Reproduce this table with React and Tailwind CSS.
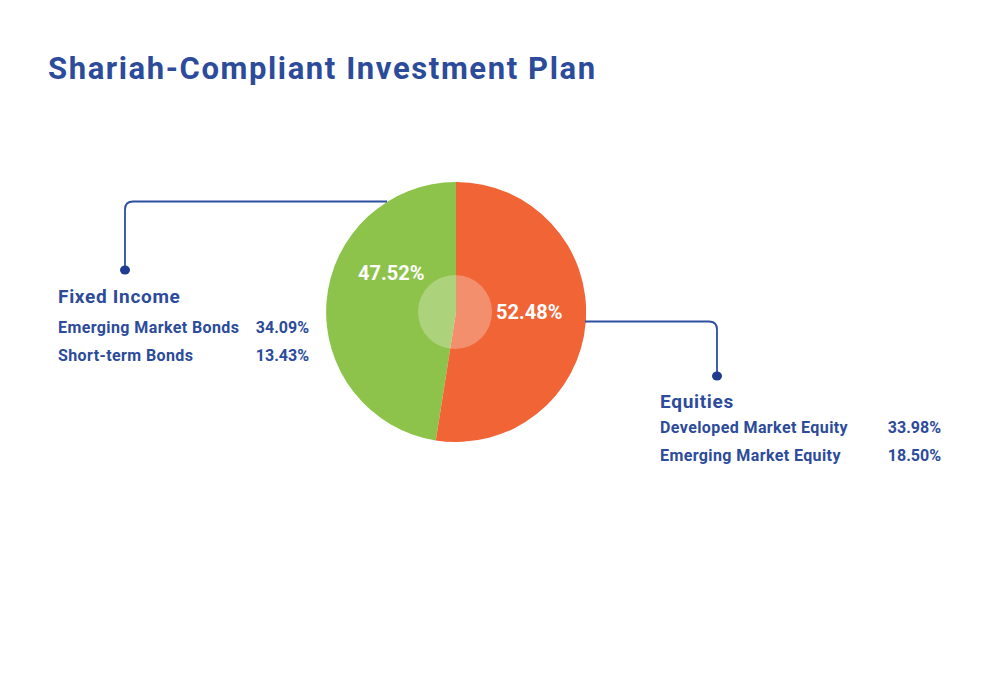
export default function App() {
  const blue = "text-[#2c4b9b]";
  return (
    <div
      className="relative w-[1000px] h-[700px] bg-white overflow-hidden"
      style={{ fontFamily: "Roboto, 'Liberation Sans', sans-serif" }}
    >
      <h1 className={`pl-[48px] pt-[49px] text-[31px] leading-[40px] font-bold tracking-[1.6px] ${blue}`}>
        Shariah-Compliant Investment Plan
      </h1>

      <div className="flex items-start">
        {/* Left labels */}
        <div className={`ml-[58px] w-[251px] mt-[196px] font-bold ${blue}`}>
          <div className="text-[19px] leading-[24px] mb-[5px] tracking-[0.7px]">Fixed Income</div>
          <div className="flex justify-between text-[16px] leading-[28px]">
            <span className="tracking-[0.4px]">Emerging Market Bonds</span>
            <span>34.09%</span>
          </div>
          <div className="flex justify-between text-[16px] leading-[28px]">
            <span className="tracking-[0.4px]">Short-term Bonds</span>
            <span>13.43%</span>
          </div>
        </div>

        {/* Pie */}
        <div className="relative ml-[17px] mt-[93px] w-[260px] h-[260px] shrink-0">
          <svg width="260" height="260" viewBox="0 0 260 260">
            <path d="M130 130 L130 0 A130 130 0 0 0 109.8 258.4 Z" fill="#8dc34a" />
            <path d="M130 130 L130 0 A130 130 0 1 1 109.8 258.4 Z" fill="#f06436" />
            <circle cx="129" cy="130" r="37" fill="#ffffff" fillOpacity="0.28" />
          </svg>
          <span className="absolute left-[32px] top-[81px] text-[20px] leading-[20px] font-bold text-white">
            47.52%
          </span>
          <span className="absolute left-[170px] top-[120px] text-[20px] leading-[20px] font-bold text-white">
            52.48%
          </span>
        </div>

        {/* Right labels */}
        <div className={`ml-[74px] w-[281px] mt-[301px] font-bold ${blue}`}>
          <div className="text-[19px] leading-[24px] tracking-[0.7px]">Equities</div>
          <div className="flex justify-between text-[16px] leading-[28px]">
            <span className="tracking-[0.4px]">Developed Market Equity</span>
            <span>33.98%</span>
          </div>
          <div className="flex justify-between text-[16px] leading-[28px]">
            <span className="tracking-[0.4px]">Emerging Market Equity</span>
            <span>18.50%</span>
          </div>
        </div>
      </div>

      {/* Leader lines */}
      <svg
        className="absolute inset-0 pointer-events-none"
        width="1000"
        height="700"
        viewBox="0 0 1000 700"
      >
        <path
          d="M387 201.5 H133 Q125 201.5 125 209.5 V270"
          fill="none"
          stroke="#2d4fa0"
          strokeWidth="1.8"
        />
        <ellipse cx="125" cy="270" rx="5" ry="4.5" fill="#1f3c91" />
        <path
          d="M585 321.5 H709 Q717 321.5 717 329.5 V376"
          fill="none"
          stroke="#2d4fa0"
          strokeWidth="1.8"
        />
        <ellipse cx="717" cy="376" rx="5" ry="4.5" fill="#1f3c91" />
      </svg>
    </div>
  );
}
